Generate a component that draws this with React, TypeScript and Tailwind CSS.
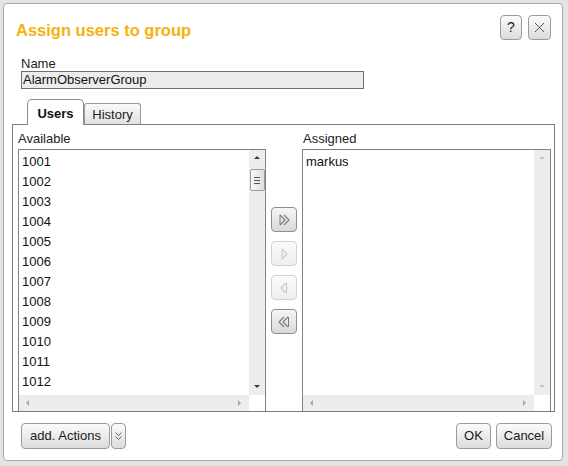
import React from 'react';

const available = ['1001', '1002', '1003', '1004', '1005', '1006', '1007', '1008', '1009', '1010', '1011', '1012'];

const btn =
  'border border-[#9b9b9b] rounded-[4px] bg-gradient-to-b from-[#fbfbfb] to-[#dcdcdc] text-[13px] text-[#1a1a1a] flex items-center justify-center';

const Tri = ({ dir, color }: { dir: 'up' | 'down' | 'left' | 'right'; color: string }) => {
  const pts = {
    up: '0,4 3,1 6,4',
    down: '0,1 3,4 6,1',
    left: '4,0 1,3 4,6',
    right: '1,0 4,3 1,6',
  }[dir];
  return (
    <svg width="6" height="6" viewBox="0 0 6 6">
      <polygon points={pts} fill={color} />
    </svg>
  );
};

const MoveIcon = ({ kind, color }: { kind: 'allRight' | 'right' | 'left' | 'allLeft'; color: string }) => {
  // outlined triangles like the old toolkit arrows
  const shapes: Record<string, string[]> = {
    allRight: ['2,1 7,6 2,11', '6,1 11,6 6,11'],
    right: ['4,1 9,6 4,11'],
    left: ['8,1 3,6 8,11'],
    allLeft: ['6,1 1,6 6,11', '10,1 5,6 10,11'],
  };
  return (
    <svg width="12" height="12" viewBox="0 0 12 12">
      {shapes[kind].map((p) => (
        <polyline key={p} points={p} fill="none" stroke={color} strokeWidth="1.1" strokeLinejoin="round" />
      ))}
      {kind === 'allLeft' && <line x1="10.5" y1="1" x2="10.5" y2="11" stroke={color} strokeWidth="1" />}
      {kind === 'left' && <line x1="8.5" y1="1" x2="8.5" y2="11" stroke={color} strokeWidth="1" />}
      {kind === 'allRight' && <line x1="2" y1="1" x2="2" y2="11" stroke={color} strokeWidth="1" />}
      {kind === 'right' && <line x1="4" y1="1" x2="4" y2="11" stroke={color} strokeWidth="1" />}
    </svg>
  );
};

const VScroll = ({ disabled }: { disabled?: boolean }) => {
  const arrow = disabled ? '#c4c4c4' : '#3c3c3c';
  return (
    <div className="w-[16px] h-full bg-[#ededed] flex flex-col items-center">
      <div className="h-[16px] flex items-center justify-center">
        <Tri dir="up" color={arrow} />
      </div>
      {!disabled && (
        <div className="mt-[3px] w-[15px] h-[22px] border border-[#9a9a9a] rounded-[2px] bg-gradient-to-r from-[#f7f7f7] to-[#dedede] flex flex-col items-center justify-center gap-[2px]">
          <div className="w-[6px] h-px bg-[#555]" />
          <div className="w-[6px] h-px bg-[#555]" />
          <div className="w-[6px] h-px bg-[#555]" />
        </div>
      )}
      <div className="flex-1" />
      <div className="h-[16px] flex items-center justify-center">
        <Tri dir="down" color={arrow} />
      </div>
    </div>
  );
};

const HScroll = () => (
  <div className="h-[16px] flex shrink-0">
    <div className="flex-1 bg-[#ededed] flex items-center justify-between px-[6px]">
      <Tri dir="left" color="#a8a8a8" />
      <Tri dir="right" color="#a8a8a8" />
    </div>
    <div className="w-[16px] bg-white" />
  </div>
);

const ListBox = ({ items, disabled, width }: { items: string[]; disabled?: boolean; width: string }) => (
  <div className={`${width} h-[262px] border border-b-0 border-[#828282] flex flex-col bg-white`}>
    <div className="flex flex-1 min-h-0">
      <div className="flex-1 overflow-hidden pt-[2px]">
        {items.map((it) => (
          <div key={it} className="h-[20px] leading-[20px] pl-[3px] text-[13px] text-[#111]">
            {it}
          </div>
        ))}
      </div>
      <VScroll disabled={disabled} />
    </div>
    <HScroll />
  </div>
);

const MoveButton = ({ kind, enabled }: { kind: 'allRight' | 'right' | 'left' | 'allLeft'; enabled: boolean }) => (
  <div
    className={
      enabled
        ? 'w-[26px] h-[25px] rounded-[4px] border border-[#8f8f8f] bg-gradient-to-b from-[#f6f6f6] to-[#d9d9d9] flex items-center justify-center'
        : 'w-[26px] h-[25px] rounded-[4px] border border-[#d3d3d3] bg-gradient-to-b from-[#fbfbfb] to-[#eeeeee] flex items-center justify-center'
    }
  >
    <MoveIcon kind={kind} color={enabled ? '#7a7a7a' : '#c8c8c8'} />
  </div>
);

export default function App() {
  return (
    <div className="w-[568px] h-[466px] bg-[#e4e4e4] p-[3px] font-['Liberation_Sans',Arial,sans-serif]">
      <div className="w-[560px] h-[458px] bg-white border border-[#a6a6a6] rounded-[4px] flex flex-col pl-[8px] pr-[6px]">
        {/* header */}
        <div className="mt-[11px] h-[25px] flex items-start justify-between pl-[4px] pr-[5px]">
          <h1 className="mt-[6px] text-[16.5px] leading-[19px] font-bold text-[#f5b20c]">Assign users to group</h1>
          <div className="flex gap-[6px]">
            <div className={`${btn} w-[22px] h-[25px] text-[14px]`}>?</div>
            <div className={`${btn} w-[23px] h-[25px]`}>
              <svg width="11" height="11" viewBox="0 0 11 11">
                <path d="M1 1 L10 10 M10 1 L1 10" stroke="#555" strokeWidth="1" />
              </svg>
            </div>
          </div>
        </div>

        {/* name */}
        <div className="mt-[16px] ml-[9px]">
          <div className="text-[13px] leading-[15px] text-[#222]">Name</div>
          <div className="w-[343px] h-[18px] border border-[#6f6f6f] bg-[#ececec] text-[13px] leading-[16px] pl-[1px] text-[#111]">
            AlarmObserverGroup
          </div>
        </div>

        {/* tabs */}
        <div className="mt-[10px] ml-[15px] flex items-end h-[25px]">
          <div className="w-[57px] h-[26px] -mb-px relative z-10 border border-b-0 border-[#8a8a8a] rounded-t-[5px] bg-white text-[13px] font-bold text-[#111] flex items-center justify-center pt-[3px]">
            Users
          </div>
          <div className="w-[57px] h-[21px] border border-b-0 border-[#9a9a9a] rounded-t-[3px] bg-gradient-to-b from-[#fafafa] to-[#e2e2e2] text-[13px] text-[#222] flex items-center justify-center pt-[1px]">
            History
          </div>
        </div>

        {/* panel */}
        <div className="w-[543px] h-[288px] border border-[#7d7d7d] flex pl-[5px] pr-[3px]">
          <div className="flex flex-col">
            <div className="mt-[6px] mb-[3px] text-[13px] leading-[15px] text-[#222]">Available</div>
            <ListBox items={available} width="w-[248px]" />
          </div>
          <div className="w-[36px] flex flex-col items-center pt-[82px] gap-[9px]">
            <MoveButton kind="allRight" enabled />
            <MoveButton kind="right" enabled={false} />
            <MoveButton kind="left" enabled={false} />
            <MoveButton kind="allLeft" enabled />
          </div>
          <div className="flex flex-col">
            <div className="mt-[6px] mb-[3px] text-[13px] leading-[15px] text-[#222] pl-[1px]">Assigned</div>
            <ListBox items={['markus']} disabled width="w-[249px]" />
          </div>
        </div>

        {/* footer */}
        <div className="mt-[11px] h-[26px] flex items-center justify-between pl-[9px] pr-[4px]">
          <div className="flex gap-[1px]">
            <div className={`${btn} w-[89px] h-[26px]`}>add. Actions</div>
            <div className={`${btn} w-[15px] h-[26px]`}>
              <svg width="7" height="9" viewBox="0 0 7 9">
                <path d="M0.5 0.5 L3.5 3.5 L6.5 0.5 M0.5 4.5 L3.5 7.5 L6.5 4.5" fill="none" stroke="#666" strokeWidth="1" />
              </svg>
            </div>
          </div>
          <div className="flex gap-[5px]">
            <div className={`${btn} w-[35px] h-[26px]`}>OK</div>
            <div className={`${btn} w-[56px] h-[26px]`}>Cancel</div>
          </div>
        </div>
      </div>
    </div>
  );
}
